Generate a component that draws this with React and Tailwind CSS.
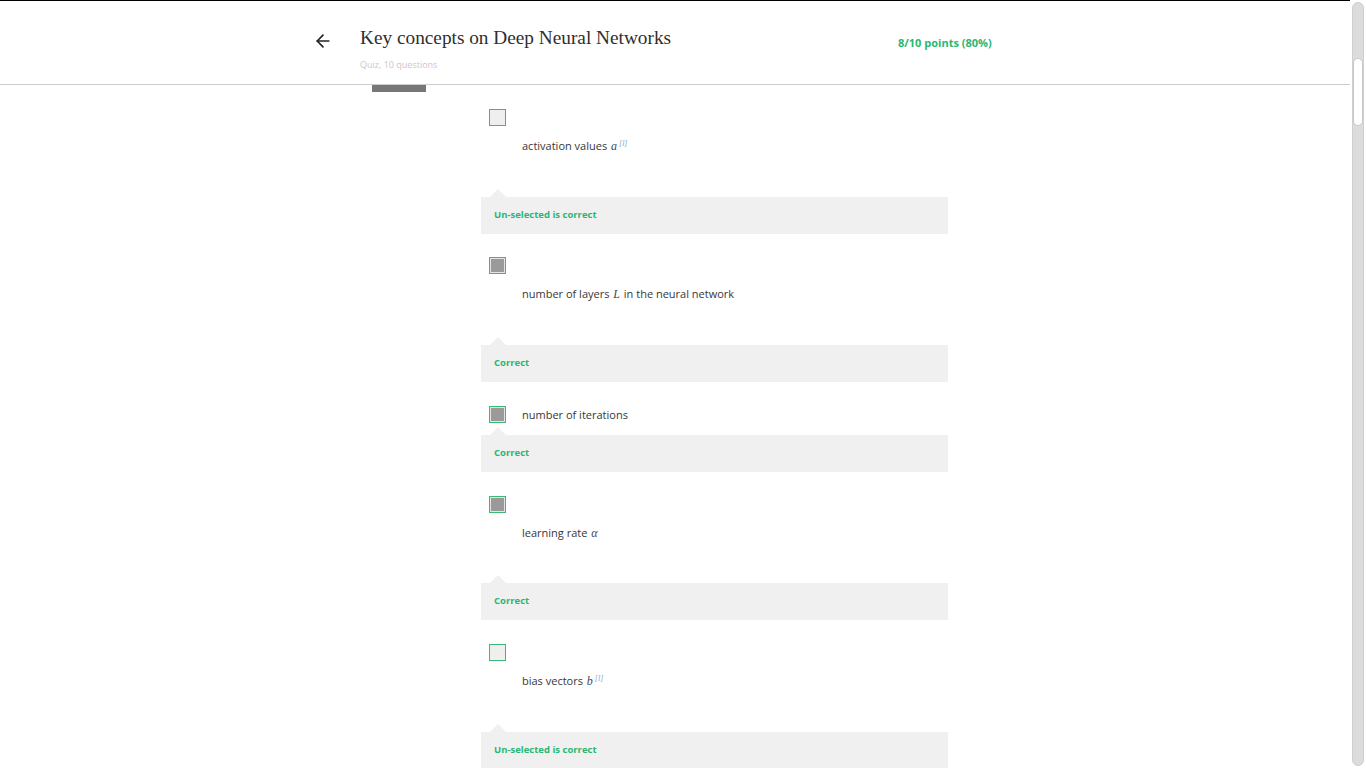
import React from 'react'

const GREEN = 'text-[#2bb673]'

const options = [
  { checked: false, inline: false, gap: 'pt-[24px]', tail: 'h-[35px]', label: 'activation values', math: 'a', sup: true, feedback: 'Un-selected is correct' },
  { checked: true, inline: false, gap: 'pt-[23px]', tail: 'h-[35px]', label: 'number of layers', math: 'L', after: 'in the neural network', feedback: 'Correct' },
  { checked: true, inline: true, gap: 'pt-[24px]', label: 'number of iterations', feedback: 'Correct' },
  { checked: true, inline: false, gap: 'pt-[24px]', tail: 'h-[34px]', label: 'learning rate', math: 'α', feedback: 'Correct' },
  { checked: false, inline: false, gap: 'pt-[24px]', tail: 'h-[35px]', label: 'bias vectors', math: 'b', sup: true, feedback: 'Un-selected is correct' },
]

function Checkbox({ checked }) {
  return (
    <div
      className={
        'w-[17px] h-[17px] shrink-0 border border-[#3cb878] ' +
        (checked ? 'bg-[#9a9a9a] shadow-[inset_0_0_0_1px_#e4e4e4]' : 'bg-[#efefef]')
      }
    />
  )
}

function Label({ opt }) {
  return (
    <span className="text-[11px] text-[#373737] leading-[16px]">
      {opt.label}
      {opt.math && (
        <>
          {' '}
          <span className="italic text-[#3e4a5c] text-[12px] mx-[1px]" style={{ fontFamily: '"Liberation Serif", serif' }}>
            {opt.math}
          </span>
          {opt.sup && (
            <sup className="text-[8px] text-[#8aa3c8] italic ml-[1px]" style={{ fontFamily: '"Liberation Serif", serif' }}>
              [l]
            </sup>
          )}
          {opt.after && ' ' + opt.after}
        </>
      )}
    </span>
  )
}

function Option({ opt }) {
  return (
    <div className={opt.gap}>
      {opt.inline ? (
        <div className="flex items-center pl-[8px] gap-[16px] pb-[4px]">
          <Checkbox checked={opt.checked} />
          <Label opt={opt} />
        </div>
      ) : (
        <>
          <div className="pl-[8px]">
            <Checkbox checked={opt.checked} />
          </div>
          <div className="pl-[41px] mt-[12px] h-[16px] flex items-center">
            <Label opt={opt} />
          </div>
          <div className={opt.tail} />
        </>
      )}
      <div className="h-[8px] pl-[9px] flex items-end">
        <div className="w-0 h-0 border-x-[8px] border-x-transparent border-b-[8px] border-b-[#f0f0f0]" />
      </div>
      <div className="h-[37px] bg-[#f0f0f0] px-[13px] flex items-center">
        <span className={'text-[9.5px] font-bold ' + GREEN}>{opt.feedback}</span>
      </div>
    </div>
  )
}

export default function App() {
  return (
    <div
      className="w-[1366px] h-[768px] overflow-hidden bg-white flex"
      style={{ fontFamily: '"Open Sans", "Liberation Sans", sans-serif' }}
    >
      <div className="flex-1 flex flex-col min-w-0">
        {/* header */}
        <div className="h-[85px] shrink-0 border-t border-t-black border-b border-b-[#cccccc] flex">
          <div className="pl-[313px] pt-[30px]">
            <svg width="20" height="20" viewBox="0 0 24 24" fill="none" stroke="#222" strokeWidth="2" strokeLinecap="round" strokeLinejoin="round">
              <path d="M19 12H5" />
              <path d="M12 19l-7-7 7-7" />
            </svg>
          </div>
          <div className="pl-[27px] pt-[25px] w-[565px] shrink-0">
            <div className="text-[19.3px] leading-[24px] text-[#2e2e2e]" style={{ fontFamily: '"Liberation Serif", serif' }}>
              Key concepts on Deep Neural Networks
            </div>
            <div className="text-[9px] text-[#cdc6c6] mt-[9px] leading-[12px]">Quiz, 10 questions</div>
          </div>
          <div className="pt-[28px]">
            <span className={'text-[11px] font-bold ' + GREEN}>8/10 points (80%)</span>
          </div>
        </div>

        {/* content */}
        <div className="flex-1 flex pl-[372px] overflow-hidden">
          <div className="w-[54px] h-[7px] bg-[#777777] shrink-0" />
          <div className="ml-[55px] w-[467px]">
            {options.map((opt, i) => (
              <Option key={i} opt={opt} />
            ))}
          </div>
        </div>
      </div>

      {/* scrollbar */}
      <div className="w-[16px] shrink-0 h-full pl-[2px] pr-[2px] py-[2px] flex">
        <div className="w-[12px] h-full rounded-[6px] bg-[#dcdcdc] border border-[#cfcfcf] pt-[55px]">
          <div className="h-[68px] rounded-[5px] bg-white border border-[#c8c8c8]" />
        </div>
      </div>
    </div>
  )
}
